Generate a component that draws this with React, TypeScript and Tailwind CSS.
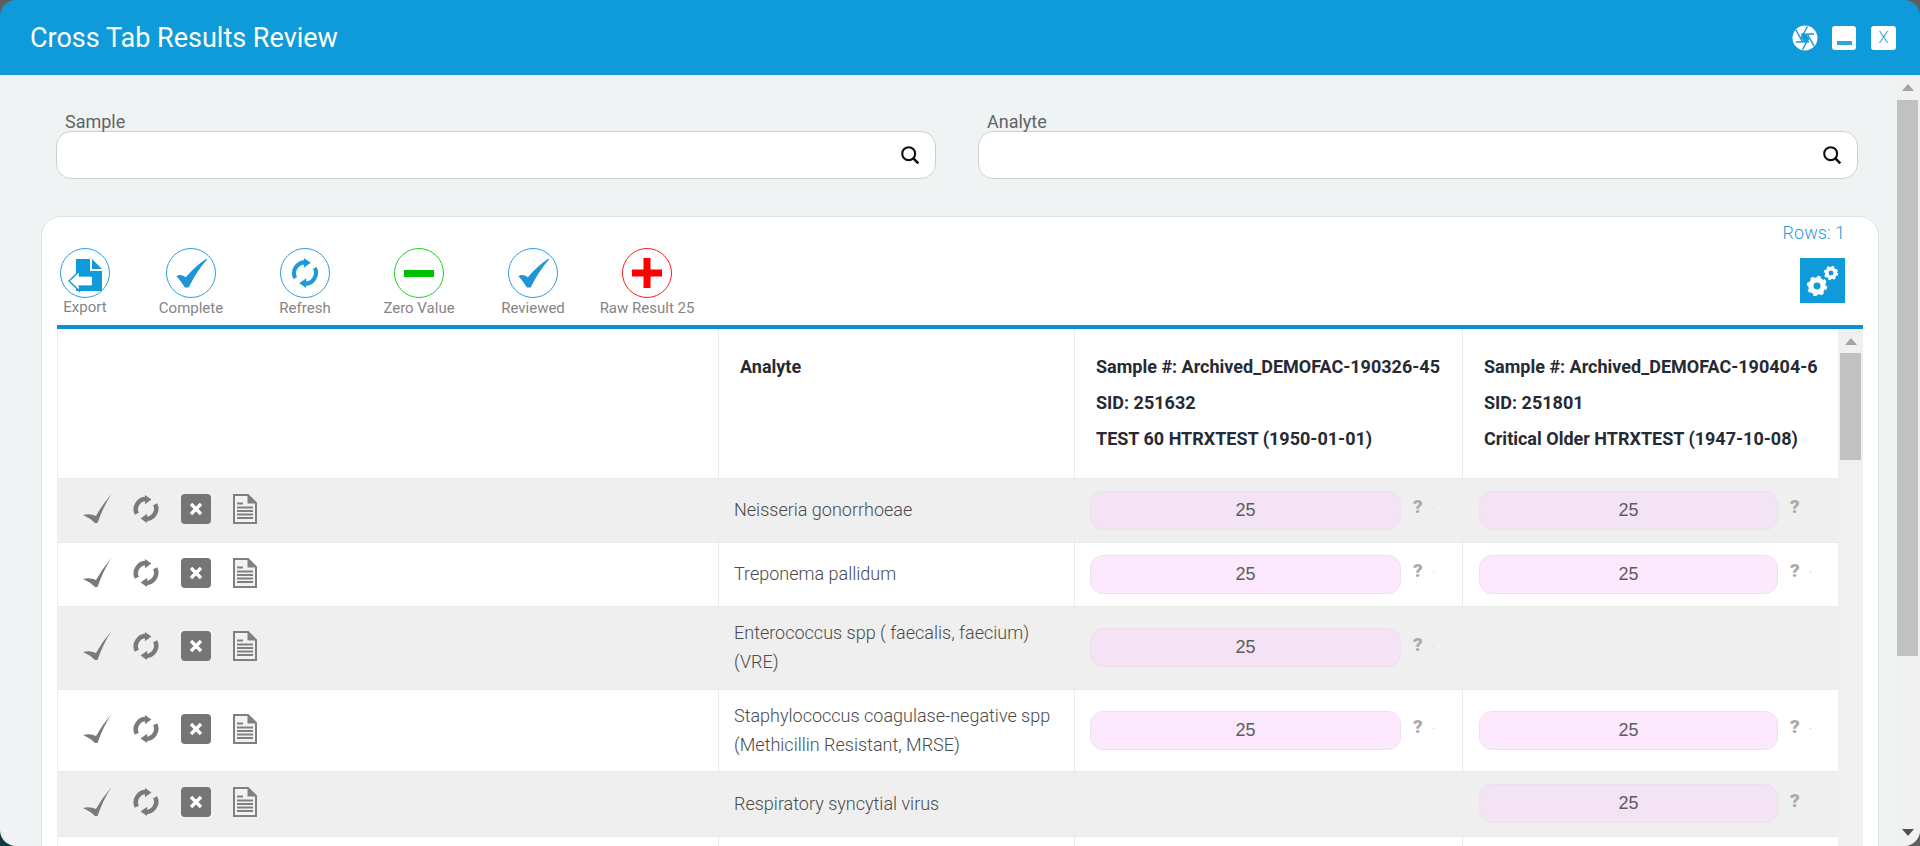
import React from "react";

const BLUE = "#0f9ad9";

function Shutter() {
  return (
    <svg width="26" height="26" viewBox="0 0 26 26">
      <circle cx="13" cy="13" r="12.5" fill="#fff" />
      <path d="M16.5 13 L14.7 16 H11.3 L9.5 13 L11.3 10 H14.7Z" fill={BLUE} />
      <g stroke={BLUE} strokeWidth="1.5" fill="none">
        <path d="M15.5 9.5 L22 21" />
        <path d="M9 9.2 L22 9" />
        <path d="M9 13 L15.5 1.5" />
        <path d="M10.5 16.8 L4 5" />
        <path d="M17 16.8 L4 17" />
        <path d="M17 13 L10.5 24.5" />
      </g>
    </svg>
  );
}

function Check({ color, size = 50 }: { color: string; size?: number }) {
  return (
    <svg width={size} height={size} viewBox="0 0 50 50">
      <path d="M9 28 Q13 25 19 29 Q28 18 41 9 L41.5 10 Q30 23 22 40 L18 40 Q14 33 9 28Z" fill={color} />
    </svg>
  );
}

function Cycle({ color, size, sw }: { color: string; size: number; sw: number }) {
  return (
    <svg width={size} height={size} viewBox="0 0 26 26" fill="none">
      <path d="M4.5 17.5 A9.5 9.5 0 0 1 14 3.8" stroke={color} strokeWidth={sw} />
      <path d="M21.5 8.5 A9.5 9.5 0 0 1 12 22.2" stroke={color} strokeWidth={sw} />
      <path d="M12 0 L18 4.2 L12 8.5Z" fill={color} />
      <path d="M14 17.5 L8 21.8 L14 26Z" fill={color} />
    </svg>
  );
}

function Circle({ color, children }: { color: string; children: React.ReactNode }) {
  return (
    <div
      className="w-[50px] h-[50px] rounded-full border flex items-center justify-center bg-white"
      style={{ borderColor: color }}
    >
      {children}
    </div>
  );
}

function ExportGlyph() {
  return (
    <svg width="48" height="48" viewBox="0 0 48 48">
      <path d="M15 10 H29 V22 H41 V42 H15Z" fill={BLUE} />
      <path d="M31 10 L41 20 H31Z" fill={BLUE} />
      <path d="M8 32 L18.5 22 V27 H30 V37 H18.5 V42Z" fill="#fff" stroke={BLUE} strokeWidth="1.4" />
      <path d="M20 27.8 H31 V36.2 H20Z" fill="#fff" />
    </svg>
  );
}

function ToolButton({ label, icon, w, up }: { label: string; icon: React.ReactNode; w: string; up?: boolean }) {
  return (
    <div className={`${w} flex flex-col items-center shrink-0`}>
      {icon}
      <span className={`${up ? "mt-0" : "mt-[1px]"} text-[15px] leading-[18px] text-[#858585] whitespace-nowrap`}>{label}</span>
    </div>
  );
}

function Gear({ cx, cy, r }: { cx: number; cy: number; r: number }) {
  const c = 2 * Math.PI * r;
  return (
    <g fill="none" stroke="#fff">
      <circle cx={cx} cy={cy} r={r * 0.72} strokeWidth={r * 0.62} />
      <circle cx={cx} cy={cy} r={r} strokeWidth={r * 0.4} strokeDasharray={`${c / 16} ${c / 16}`} />
    </g>
  );
}

function SearchIcon() {
  return (
    <svg width="20" height="20" viewBox="0 0 18 18" fill="none" stroke="#111" strokeWidth="1.9">
      <circle cx="7.8" cy="7.8" r="5.8" />
      <path d="M12 12 L16.5 16.5" strokeWidth="2.4" />
    </svg>
  );
}

function SearchField({ label, className }: { label: string; className: string }) {
  return (
    <div className={className}>
      <div className="pl-[9px] h-[18px] text-[18px] leading-[18px] text-[#5f6468]">{label}</div>
      <div className="h-[48px] bg-white border border-[#cfcfcf] rounded-[15px] flex items-center justify-end pr-[15px]">
        <SearchIcon />
      </div>
    </div>
  );
}

function RowIcons() {
  return (
    <div className="flex items-center pl-[20px] -mt-[3px]">
      <svg width="34" height="32" viewBox="0 0 34 32" className="shrink-0">
        <path d="M5 22 Q12 20 18 23 Q24 12 33.5 1 Q25 14 19.5 30 L17 30 Q12 25 5 22Z" fill="#7a7a7a" />
      </svg>
      <div className="ml-[20px] shrink-0 flex">
        <Cycle color="#7a7a7a" size={28} sw={4.2} />
      </div>
      <div className="ml-[21px] w-[30px] h-[30px] shrink-0 rounded-[4px] bg-[#757575] flex items-center justify-center">
        <svg width="14" height="14" viewBox="0 0 14 14" stroke="#fff" strokeWidth="3.4">
          <path d="M2 2 L12 12 M12 2 L2 12" />
        </svg>
      </div>
      <svg width="24" height="30" viewBox="0 0 24 30" className="ml-[22px] shrink-0">
        <path d="M1 1 H15 L23 9 V29 H1Z" fill="#f2f2f2" stroke="#808080" strokeWidth="2" />
        <path d="M14.5 1 V9.5 H23 L15 1Z" fill="#808080" />
        <path d="M4 9.5 H10 M4 13.5 H20 M4 17 H20 M4 20.5 H20 M4 24 H20" stroke="#808080" strokeWidth="1.8" />
      </svg>
    </div>
  );
}

function ValueCell({ value, grey, pill, pad }: { value: boolean; grey: boolean; pill: string; pad: string }) {
  if (!value) return <td className="border-l border-[#ebebeb]" />;
  return (
    <td className={`border-l border-[#ebebeb] ${pad} align-middle`}>
      <div className="flex items-center">
        <div
          className={`${pill} h-[39px] rounded-[13px] border flex items-center justify-center text-[18px] text-[#5c5c5c] font-[family-name:'Liberation_Sans',sans-serif] ${
            grey ? "bg-[#f4e3f5] border-[#eddfee]" : "bg-[#fde9fe] border-[#eee0ee]"
          }`}
        >
          25
        </div>
        <span className="ml-[12px] -mt-[6px] text-[19px] leading-[20px] font-black text-[#aaaaaa]">?</span>
        <span className="ml-[10px] -mt-[3px] w-[1px] h-[1px] bg-[#cccccc]" />
      </div>
    </td>
  );
}

const rows = [
  { h: "h-[64px]", text: ["Neisseria gonorrhoeae"], a: true, b: true },
  { h: "h-[64px]", text: ["Treponema pallidum"], a: true, b: true },
  { h: "h-[83px]", text: ["Enterococcus spp ( faecalis, faecium)", "(VRE)"], a: true, b: false },
  { h: "h-[82px]", text: ["Staphylococcus coagulase-negative spp", "(Methicillin Resistant, MRSE)"], a: true, b: true },
  { h: "h-[65px]", text: ["Respiratory syncytial virus"], a: false, b: true },
];

export default function App() {
  return (
    <div className="relative h-[846px] w-full overflow-hidden bg-[#5f5f5f] font-[family-name:Roboto,sans-serif]">
      <div className="absolute left-0 bottom-0 w-[20px] h-[20px] bg-[#0c3a45]" />
      <div className="relative h-full flex flex-col rounded-[16px] overflow-hidden">
        <header className="h-[75px] shrink-0 flex items-center pl-[30px] pr-[24px]" style={{ backgroundColor: BLUE }}>
          <h1 className="text-[27px] leading-[30px] font-normal text-white">Cross Tab Results Review</h1>
          <div className="ml-auto flex items-center">
            <Shutter />
            <div className="ml-[14px] w-[24px] h-[24px] bg-white rounded-[3px] flex items-end justify-center pb-[5px]">
              <div className="w-[15px] h-[4px] bg-[#2da6df]" />
            </div>
            <div className="ml-[15px] w-[25px] h-[24px] bg-white rounded-[3px] flex items-center justify-center text-[17px] font-light text-[#2da6df]">
              X
            </div>
          </div>
        </header>

        <div className="flex-1 min-h-0 flex bg-[#f0f3f3]">
          <div className="flex-1 min-w-0 overflow-hidden pl-[41px] pr-[18px]">
            <div className="flex pl-[15px] pr-[21px] pt-[38px]">
              <SearchField label="Sample" className="w-[880px]" />
              <SearchField label="Analyte" className="w-[880px] ml-[42px]" />
            </div>

            <div className="mt-[37px] h-[700px] bg-white border border-[#dfe3e3] rounded-[20px] pl-[15px] pr-[15px]">
              <div className="relative h-[108px]">
                <div className="absolute right-[18px] top-[4px] text-[18px] leading-[24px] font-light text-[#2f97d8]">Rows: 1</div>
                <div
                  className="absolute right-[18px] top-[41px] w-[45px] h-[45px] flex items-center justify-center"
                  style={{ backgroundColor: BLUE }}
                >
                  <svg width="45" height="45" viewBox="0 0 45 45">
                    <Gear cx={17} cy={28} r={8.5} />
                    <Gear cx={31} cy={15} r={6} />
                  </svg>
                </div>
                <div className="flex pt-[31px] pl-[3px]">
                  <ToolButton
                    up
                    w="w-[50px]"
                    label="Export"
                    icon={
                      <Circle color="#2a9fdc">
                        <ExportGlyph />
                      </Circle>
                    }
                  />
                  <ToolButton
                    w="w-[50px] ml-[56px]"
                    label="Complete"
                    icon={
                      <Circle color="#2a9fdc">
                        <Check color="#1f95d6" size={47} />
                      </Circle>
                    }
                  />
                  <ToolButton
                    w="w-[50px] ml-[64px]"
                    label="Refresh"
                    icon={
                      <Circle color="#2a9fdc">
                        <Cycle color="#1f9ad9" size={30} sw={3.6} />
                      </Circle>
                    }
                  />
                  <ToolButton
                    w="w-[50px] ml-[64px]"
                    label="Zero Value"
                    icon={
                      <Circle color="#22cc22">
                        <div className="w-[30px] h-[7px] bg-[#00c000]" />
                      </Circle>
                    }
                  />
                  <ToolButton
                    w="w-[50px] ml-[64px]"
                    label="Reviewed"
                    icon={
                      <Circle color="#2a9fdc">
                        <Check color="#1f95d6" size={47} />
                      </Circle>
                    }
                  />
                  <ToolButton
                    w="w-[50px] ml-[64px]"
                    label="Raw Result 25"
                    icon={
                      <Circle color="#ff1a1a">
                        <svg width="30" height="30" viewBox="0 0 30 30" fill="#ff0000">
                          <path d="M11.5 0 H18.5 V11.5 H30 V18.5 H18.5 V30 H11.5 V18.5 H0 V11.5 H11.5Z" />
                        </svg>
                      </Circle>
                    }
                  />
                </div>
              </div>

              <div className="border-t-[4px] border-[#0f8fd2] flex h-[600px] overflow-hidden">
                <div className="w-[1781px] shrink-0 overflow-hidden">
                  <table className="w-[1781px] table-fixed border-collapse border-l border-[#eeeeee]">
                    <colgroup>
                      <col className="w-[661px]" />
                      <col className="w-[356px]" />
                      <col className="w-[388px]" />
                      <col className="w-[376px]" />
                    </colgroup>
                    <thead>
                      <tr className="h-[149px] text-[18px] leading-[36px] text-[#262b33]">
                        <th />
                        <th className="border-l border-[#ebebeb] pl-[21px] pt-[20px] align-top text-left font-bold">Analyte</th>
                        <th className="border-l border-[#ebebeb] pl-[21px] pt-[20px] align-top text-left font-bold whitespace-nowrap">
                          <div>Sample #: Archived_DEMOFAC-190326-45</div>
                          <div>SID: 251632</div>
                          <div>TEST 60 HTRXTEST (1950-01-01)</div>
                        </th>
                        <th className="border-l border-[#ebebeb] pl-[21px] pt-[20px] align-top text-left font-bold whitespace-nowrap">
                          <div>Sample #: Archived_DEMOFAC-190404-6</div>
                          <div>SID: 251801</div>
                          <div>Critical Older HTRXTEST (1947-10-08)</div>
                        </th>
                      </tr>
                    </thead>
                    <tbody>
                      {rows.map((r, i) => {
                        const grey = i % 2 === 0;
                        return (
                          <tr key={i} className={`${r.h} border-t border-[#ebebeb] ${grey ? "bg-[#efefef]" : "bg-white"}`}>
                            <td className="align-middle">
                              <RowIcons />
                            </td>
                            <td className="border-l border-[#ebebeb] pl-[15px] align-middle text-[18px] leading-[29px] font-light text-[#4a4a4a]">
                              <div className="-mt-[1px]">
                                {r.text.map((t) => (
                                  <div key={t}>{t}</div>
                                ))}
                              </div>
                            </td>
                            <ValueCell value={r.a} grey={grey} pill="w-[311px]" pad="pl-[15px]" />
                            <ValueCell value={r.b} grey={grey} pill="w-[299px]" pad="pl-[16px]" />
                          </tr>
                        );
                      })}
                      <tr className="h-[65px] border-t border-[#ebebeb] bg-white">
                        <td />
                        <td className="border-l border-[#ebebeb]" />
                        <td className="border-l border-[#ebebeb]" />
                        <td className="border-l border-[#ebebeb]" />
                      </tr>
                    </tbody>
                  </table>
                </div>
                <div className="w-[25px] shrink-0 bg-[#f0f0f0] flex flex-col items-center">
                  <div className="h-[24px] flex items-center justify-center">
                    <svg width="12" height="7" viewBox="0 0 12 7" fill="#a3a3a3">
                      <path d="M6 0 L12 7 H0Z" />
                    </svg>
                  </div>
                  <div className="w-[21px] h-[107px] bg-[#c1c1c1]" />
                </div>
              </div>
            </div>
          </div>

          <div className="w-[23px] shrink-0 bg-[#f1f1f1] flex flex-col">
            <div className="h-[25px] flex items-center justify-center pr-[2px]">
              <svg width="12" height="7" viewBox="0 0 12 7" fill="#a3a3a3">
                <path d="M6 0 L12 7 H0Z" />
              </svg>
            </div>
            <div className="w-[21px] h-[556px] bg-[#c1c1c1]" />
            <div className="flex-1 flex items-end justify-center pr-[2px] pb-[10px]">
              <svg width="12" height="7" viewBox="0 0 12 7" fill="#505050">
                <path d="M0 0 H12 L6 7Z" />
              </svg>
            </div>
          </div>
        </div>
      </div>
    </div>
  );
}
